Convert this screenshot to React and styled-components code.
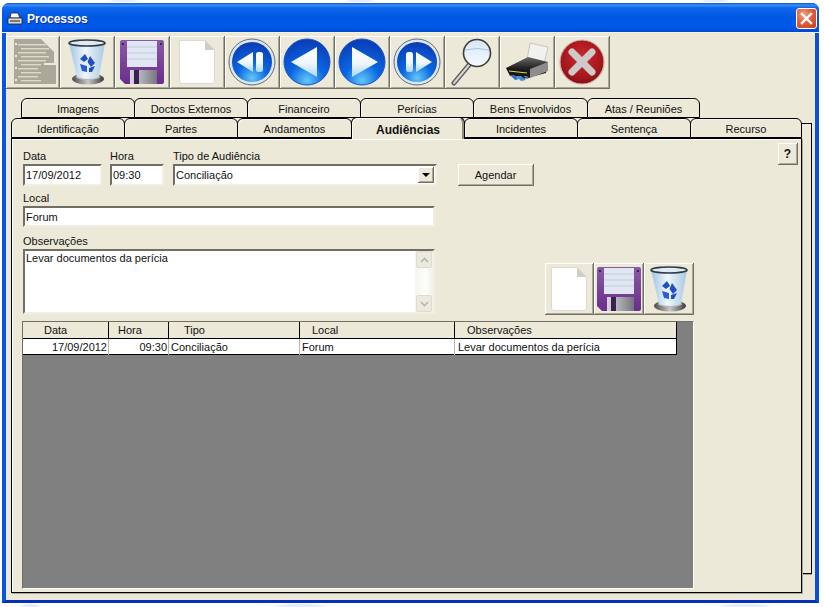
import React from 'react';
import styled, { createGlobalStyle } from 'styled-components';

const GlobalStyle = createGlobalStyle`
  html, body {
    margin: 0;
    padding: 0;
    height: 607px;
    overflow: hidden;
    background: #fff;
    font-family: "Liberation Sans", Arial, sans-serif;
    font-size: 11px;
    color: #111;
  }
`;

const raised = `
  box-sizing: border-box;
  box-shadow: inset 1px 1px 0 #fff, inset -1px -1px 0 #aca899;
  border-right: 1px solid #716f64;
  border-bottom: 1px solid #716f64;
`;

const sunken = `
  border-top: 2px solid #716f64;
  border-left: 2px solid #716f64;
  border-right: 2px solid #f1efe2;
  border-bottom: 2px solid #f1efe2;
`;

const Desktop = styled.div`
  padding: 3px 0 0 2px;
  height: 607px;
  box-sizing: border-box;
  background:
    radial-gradient(ellipse 16px 3px at 124px 0, #e6ecf8 60%, transparent 100%),
    radial-gradient(ellipse 16px 3px at 360px 0, #e6ecf8 60%, transparent 100%),
    radial-gradient(ellipse 16px 3px at 715px 0, #e6ecf8 60%, transparent 100%),
    radial-gradient(ellipse 12px 4px at 30px 607px, #e6ecf8 60%, transparent 100%),
    radial-gradient(ellipse 30px 4px at 300px 607px, #e6ecf8 60%, transparent 100%),
    radial-gradient(ellipse 30px 4px at 745px 607px, #e6ecf8 60%, transparent 100%),
    #fff;
`;

const Window = styled.div`
  width: 817px;
  height: 600px;
  box-sizing: border-box;
  background: #ece9d8;
  border-left: 4px solid #0a55e0;
  border-right: 4px solid #0a50d8;
  border-bottom: 3px solid #0431b8;
  border-radius: 7px 7px 0 0;
`;

const TitleBar = styled.div`
  height: 30px;
  box-sizing: border-box;
  margin: 0 -4px;
  padding: 3px 2px 0 5px;
  display: flex;
  align-items: center;
  gap: 4px;
  border-radius: 7px 7px 0 0;
  background: linear-gradient(180deg, #0a5bdd 0, #3d8df2 8%, #0f68ec 16%, #0057e4 50%, #0059ea 82%, #0049cf 100%);
  border-bottom: 1px solid #f4f2e6;
`;

const TitleText = styled.span`
  flex: 1;
  color: #fff;
  font-weight: bold;
  font-size: 12px;
  text-shadow: 1px 1px 0 #0a2f9c;
`;

const CloseButton = styled.div`
  width: 19px;
  height: 19px;
  margin-top: -1px;
  display: flex;
  align-items: center;
  justify-content: center;
  border: 1px solid #fff;
  border-radius: 3px;
  background: radial-gradient(circle at 35% 30%, #f0a080 0, #e0603a 45%, #c73d1c 100%);
`;

const Toolbar = styled.div`
  display: flex;
  padding: 3px 0 0 0;
`;

const ToolButton = styled.div`
  width: ${(p) => p.$w || 55}px;
  height: ${(p) => p.$h || 53}px;
  flex-shrink: 0;
  display: flex;
  align-items: center;
  justify-content: center;
  ${raised}
`;

const TabArea = styled.div`
  position: relative;
  width: 791px;
  margin: 9px 0 0 5px;
`;

const BackPage = styled.div`
  position: absolute;
  left: 770px;
  top: 25px;
  width: 30px;
  height: 449px;
  border: 1px solid #000;
  border-left: 0;
  background: #ece9d8;
  box-shadow: 0 1px 0 #aca899;
`;

const TabRow = styled.div`
  position: relative;
  display: flex;
  height: 20px;
  padding-left: ${(p) => p.$indent || 0}px;
`;

const Tab = styled.div`
  position: relative;
  width: ${(p) => p.$w}px;
  height: ${(p) => (p.$active ? 22 : 20)}px;
  margin-top: ${(p) => (p.$active ? -1 : 0)}px;
  margin-right: -1px;
  box-sizing: border-box;
  z-index: ${(p) => (p.$active ? 2 : 1)};
  display: flex;
  align-items: center;
  justify-content: center;
  padding-top: ${(p) => (p.$active ? 3 : 2)}px;
  background: #ece9d8;
  border: 1px solid #000;
  border-bottom: ${(p) => (p.$active ? '0' : '1px solid #000')};
  border-radius: 6px 6px 0 0;
  font-size: ${(p) => (p.$active ? 12 : 11)}px;
  font-weight: ${(p) => (p.$active ? 'bold' : 'normal')};
  box-shadow: ${(p) => (p.$active ? 'inset 1px 1px 0 #fff, inset -2px 0 0 #8f8c7e' : 'inset 1px 1px 0 #f7f5ea')};
`;

const Panel = styled.div`
  position: relative;
  width: 791px;
  height: 455px;
  box-sizing: border-box;
  background: #ece9d8;
  border: 1px solid #000;
  box-shadow: inset 1px 1px 0 #fff, 1px 1px 0 #aca899;
  padding: 4px 0 0 11px;
`;

const TopRow = styled.div`
  display: flex;
  align-items: flex-start;
`;

const Field = styled.div`
  width: ${(p) => p.$w}px;
  margin-right: ${(p) => p.$gap || 0}px;
  margin-top: ${(p) => p.$top || 0}px;
`;

const Label = styled.div`
  height: 14px;
  line-height: 13px;
`;

const TextBox = styled.input`
  display: block;
  width: 100%;
  height: ${(p) => p.$h || 22}px;
  box-sizing: border-box;
  ${sunken}
  padding: 0 1px;
  margin: 0;
  outline: 0;
  background: #fff;
  color: #111;
  font: 11px "Liberation Sans", Arial, sans-serif;
`;

const SelectBox = styled.div`
  height: 22px;
  box-sizing: border-box;
  ${sunken}
  background: #fff;
  display: flex;
  align-items: center;
  padding-left: 1px;
`;

const SelectValue = styled.span`
  flex: 1;
`;

const SelectArrow = styled.div`
  width: 16px;
  height: 16px;
  margin-right: 1px;
  display: flex;
  align-items: center;
  justify-content: center;
  background: #ece9d8;
  ${raised}
  &::after {
    content: "";
    border-left: 4px solid transparent;
    border-right: 4px solid transparent;
    border-top: 4px solid #000;
  }
`;

const PushButton = styled.div`
  width: 76px;
  height: 22px;
  margin: 21px 0 0 21px;
  display: flex;
  align-items: center;
  justify-content: center;
  background: #ece9d8;
  ${raised}
`;

const HelpButton = styled.div`
  width: 20px;
  height: 22px;
  margin: 0 3px 0 auto;
  display: flex;
  align-items: center;
  justify-content: center;
  font-size: 12px;
  font-weight: bold;
  ${raised}
`;

const ObsRow = styled.div`
  display: flex;
  align-items: flex-end;
  margin-top: 8px;
`;

const ObsBox = styled.div`
  display: flex;
  height: 65px;
  box-sizing: border-box;
  ${sunken}
  background: #fff;
`;

const ObsText = styled.div`
  flex: 1;
  padding: 1px;
`;

const ScrollBar = styled.div`
  width: 18px;
  display: flex;
  flex-direction: column;
  justify-content: space-between;
  background: linear-gradient(90deg, #f5f4ee, #fdfdfb 60%, #f0efe6);
`;

const ScrollArrow = styled.div`
  height: 17px;
  margin: 0 1px;
  display: flex;
  align-items: center;
  justify-content: center;
  background: #ece9df;
  border: 1px solid #dedccf;
  border-radius: 2px;
  box-sizing: border-box;
`;

const RecordButtons = styled.div`
  display: flex;
  margin: 0 0 -1px 110px;
`;

const HiddenSvg = styled.svg`
  position: absolute;
`;

const Grid = styled.div`
  width: 672px;
  height: 268px;
  margin: 7px 0 0 -1px;
  box-sizing: border-box;
  background: #808080;
  border-top: 1px solid #716f64;
  border-left: 1px solid #716f64;
  border-right: 1px solid #fff;
  border-bottom: 1px solid #fff;
`;

const GridRow = styled.div`
  display: grid;
  grid-template-columns: 86px 60px 131px 155px 222px;
  width: 654px;
  height: ${(p) => p.$h}px;
  box-sizing: border-box;
  background: ${(p) => (p.$head ? '#ece9d8' : '#fff')};
  border-bottom: 1px solid #000;
  border-right: 1px solid #000;
`;

const HeadCell = styled.div`
  box-sizing: border-box;
  padding-left: ${(p) => p.$pad}px;
  line-height: 17px;
  border-right: 1px solid #000;
  &:last-child { border-right: 0; }
`;

const Cell = styled.div`
  box-sizing: border-box;
  padding: 0 1px 0 2px;
  line-height: 16px;
  text-align: ${(p) => (p.$right ? 'right' : 'left')};
  border-right: 1px solid #b9b7aa;
  white-space: nowrap;
  &:last-child { border-right: 0; padding-left: 3px; }
`;

const Defs = () => (
  <HiddenSvg width="0" height="0">
    <defs>
      <radialGradient id="blueBall" cx="50%" cy="90%" r="85%">
        <stop offset="0" stopColor="#62c8fa" />
        <stop offset="0.45" stopColor="#0a66e0" />
        <stop offset="1" stopColor="#0a3fb8" />
      </radialGradient>
      <linearGradient id="glyph" x1="0" y1="0" x2="0" y2="1">
        <stop offset="0" stopColor="#ffffff" />
        <stop offset="0.55" stopColor="#eef6fd" />
        <stop offset="1" stopColor="#a9d6f6" />
      </linearGradient>
      <radialGradient id="redBall" cx="50%" cy="40%" r="65%">
        <stop offset="0" stopColor="#c92a2e" />
        <stop offset="0.7" stopColor="#a5161c" />
        <stop offset="1" stopColor="#7c0d12" />
      </radialGradient>
      <linearGradient id="binGlass" x1="0" y1="0" x2="1" y2="0">
        <stop offset="0" stopColor="#9ec3e2" />
        <stop offset="0.45" stopColor="#eef6fc" />
        <stop offset="1" stopColor="#a9c8e2" />
      </linearGradient>
      <linearGradient id="binBase" x1="0" y1="0" x2="1" y2="0">
        <stop offset="0" stopColor="#4c4c4c" />
        <stop offset="0.5" stopColor="#c8c8c8" />
        <stop offset="1" stopColor="#3c3c3c" />
      </linearGradient>
      <linearGradient id="floppyBody" x1="0" y1="0" x2="0" y2="1">
        <stop offset="0" stopColor="#8a5aa5" />
        <stop offset="1" stopColor="#6a2d8c" />
      </linearGradient>
      <linearGradient id="shutter" x1="0" y1="0" x2="1" y2="0">
        <stop offset="0" stopColor="#d8d6de" />
        <stop offset="1" stopColor="#77757f" />
      </linearGradient>
      <linearGradient id="printerBody" x1="0" y1="0" x2="0" y2="1">
        <stop offset="0" stopColor="#6a6a6a" />
        <stop offset="0.5" stopColor="#222" />
        <stop offset="1" stopColor="#0c0c0c" />
      </linearGradient>
      <linearGradient id="lensFill" x1="0" y1="0" x2="0" y2="1">
        <stop offset="0" stopColor="#d6e6f6" />
        <stop offset="1" stopColor="#f6fafe" />
      </linearGradient>
    </defs>
  </HiddenSvg>
);

const DisabledDocIcon = () => (
  <svg width="48" height="48" viewBox="0 0 48 48">
    <path d="M5 1H32L45 14V25H35V46H5Z" fill="#aaa898" />
    <rect x="33" y="27" width="14" height="19" fill="#aaa898" />
    {[6, 10, 14, 18, 22, 26, 30, 34, 38, 42].map((y) => (
      <rect key={y} x={y % 8 === 6 ? 9 : 12} y={y} width={y > 22 ? 20 : 28} height="1.4" fill="#dedbca" />
    ))}
    <rect x="6" y="5" width="2" height="2" fill="#ece9d8" />
    <rect x="6" y="17" width="2" height="2" fill="#ece9d8" />
    <rect x="6" y="29" width="2" height="2" fill="#ece9d8" />
    <rect x="6" y="41" width="2" height="2" fill="#ece9d8" />
  </svg>
);

const TrashIcon = () => (
  <svg width="46" height="48" viewBox="0 0 46 48">
    <ellipse cx="24" cy="41" rx="16" ry="5.5" fill="url(#binBase)" />
    <ellipse cx="24" cy="39" rx="12" ry="3" fill="#b9b9b9" />
    <path d="M5 5L13 39Q24 43 35 39L41 5Z" fill="url(#binGlass)" />
    <ellipse cx="23" cy="5" rx="18" ry="3" fill="#dfeaf3" stroke="#2d3a44" strokeWidth="1.6" />
    <path d="M16 21L21 16L24 21L20 24Z" fill="#1f4fc0" />
    <path d="M26 18L31 25L27 29L23.5 24Z" fill="#1f4fc0" />
    <path d="M16 26L23 28V34L18 33Z" fill="#2a5dcf" />
    <path d="M25 30L31 28L28 34L25 34Z" fill="#1f4fc0" />
  </svg>
);

const FloppyIcon = () => (
  <svg width="46" height="46" viewBox="0 0 46 46">
    <path d="M1 3Q1 1 3 1H43Q45 1 45 3V43Q45 45 43 45H6L1 40Z" fill="url(#floppyBody)" />
    <rect x="8" y="2" width="30" height="26" fill="#e0e6f2" />
    <path d="M8 8H38M8 14H38M8 20H38" stroke="#c2cbdf" strokeWidth="1" />
    <rect x="11" y="31" width="27" height="14" fill="url(#shutter)" />
    <rect x="15" y="31" width="5" height="14" fill="#3c2150" />
    <rect x="3" y="4" width="2" height="2" fill="#3f2058" />
    <rect x="41" y="4" width="2" height="2" fill="#3f2058" />
  </svg>
);

const PageIcon = () => (
  <svg width="38" height="46" viewBox="0 0 38 46">
    <path d="M1.5 1.5H27L36.5 11V42Q36.5 44.5 34 44.5H4Q1.5 44.5 1.5 42Z" fill="#fff" stroke="#dcdad0" strokeWidth="1" />
    <path d="M27 1.5V11H36.5Z" fill="#cfcdc4" />
  </svg>
);

const BlueButtonIcon = ({ kind }) => {
  const ring = kind === 'first' || kind === 'last';
  return (
    <svg width="48" height="48" viewBox="0 0 48 48">
      {ring && <circle cx="24" cy="24" r="23" fill="#dfe6ee" stroke="#5b6b80" strokeWidth="1" />}
      <circle cx="24" cy="24" r={ring ? 20 : 23} fill="url(#blueBall)" stroke={ring ? 'none' : '#1a50c8'} />
      {kind === 'first' && (
        <>
          <path d="M9 24L25 14V34Z" fill="url(#glyph)" />
          <rect x="28" y="14" width="7" height="20" rx="2.5" fill="url(#glyph)" />
        </>
      )}
      {kind === 'prev' && <path d="M8 24L34 9V39Z" fill="url(#glyph)" />}
      {kind === 'next' && <path d="M40 24L14 9V39Z" fill="url(#glyph)" />}
      {kind === 'last' && (
        <>
          <rect x="13" y="14" width="7" height="20" rx="2.5" fill="url(#glyph)" />
          <path d="M39 24L23 14V34Z" fill="url(#glyph)" />
        </>
      )}
    </svg>
  );
};

const SearchIcon = () => (
  <svg width="44" height="48" viewBox="0 0 44 48">
    <path d="M4 45L19 27" stroke="#5d5d5d" strokeWidth="5" strokeLinecap="round" />
    <path d="M4 45L19 27" stroke="#d4d4d4" strokeWidth="2" strokeLinecap="round" />
    <circle cx="27" cy="15" r="13.5" fill="url(#lensFill)" stroke="#3c3c3c" strokeWidth="1.6" />
    <path d="M15 12Q27 9 39 12" stroke="#a8c4de" strokeWidth="1" fill="none" />
  </svg>
);

const PrinterIcon = () => (
  <svg width="46" height="44" viewBox="0 0 46 44">
    <path d="M26 3L44 7L40 24L23 20Z" fill="#f1f1ef" stroke="#b5b5b5" strokeWidth="0.7" />
    <path d="M2 28L24 17L44 22L42 33L19 39Z" fill="url(#printerBody)" />
    <path d="M44 22V31L26 38L26 29Z" fill="#8d8d8d" />
    <path d="M2 28L24 30L26 38L6 36Z" fill="#171717" />
    <path d="M5 31L23 33" stroke="#e6d84a" strokeWidth="1" />
    <path d="M6 35L11 40L15 39L10 35Z" fill="#2f6fd0" />
    <path d="M12 36L17 41L22 40L17 36Z" fill="#3f8fd8" />
    <path d="M19 36L23 39L25 38L23 36Z" fill="#5d6f8a" />
  </svg>
);

const StopIcon = () => (
  <svg width="46" height="46" viewBox="0 0 46 46">
    <circle cx="23" cy="23" r="22" fill="url(#redBall)" stroke="#c9b0a8" strokeWidth="1.2" />
    <path d="M13 13L33 33M33 13L13 33" stroke="#cfcaca" strokeWidth="7" strokeLinecap="round" />
  </svg>
);

const WindowIcon = () => (
  <svg width="16" height="14" viewBox="0 0 16 14">
    <path d="M4 1H11L13 6H3Z" fill="#fff" stroke="#222" strokeWidth="0.8" />
    <path d="M1 6H15V12H1Z" fill="#d8d8d8" stroke="#222" strokeWidth="0.8" />
    <path d="M3 9H13" stroke="#222" strokeWidth="1" />
  </svg>
);

const CloseIcon = () => (
  <svg width="13" height="13" viewBox="0 0 13 13">
    <path d="M2 2L11 11M11 2L2 11" stroke="#fff" strokeWidth="2.4" strokeLinecap="square" />
  </svg>
);

const ScrollGlyph = ({ up }) => (
  <svg width="9" height="6" viewBox="0 0 9 6">
    <path d={up ? 'M1 5L4.5 1.5L8 5' : 'M1 1L4.5 4.5L8 1'} stroke="#b8b6a8" strokeWidth="1.6" fill="none" />
  </svg>
);

const backTabs = [
  ['Imagens', 114],
  ['Doctos Externos', 114],
  ['Financeiro', 114],
  ['Perícias', 114],
  ['Bens Envolvidos', 115],
  ['Atas / Reuniões', 113],
];

const frontTabs = [
  ['Identificação', 114],
  ['Partes', 114],
  ['Andamentos', 115],
  ['Audiências', 114],
  ['Incidentes', 114],
  ['Sentença', 114],
  ['Recurso', 112],
];

const columns = [
  ['Data', 21],
  ['Hora', 9],
  ['Tipo', 15],
  ['Local', 12],
  ['Observações', 12],
];

export default function App() {
  return (
    <Desktop>
      <GlobalStyle />
      <Defs />
      <Window>
        <TitleBar>
          <WindowIcon />
          <TitleText>Processos</TitleText>
          <CloseButton><CloseIcon /></CloseButton>
        </TitleBar>
        <Toolbar>
          <ToolButton $w={54}><DisabledDocIcon /></ToolButton>
          <ToolButton><TrashIcon /></ToolButton>
          <ToolButton><FloppyIcon /></ToolButton>
          <ToolButton><PageIcon /></ToolButton>
          <ToolButton><BlueButtonIcon kind="first" /></ToolButton>
          <ToolButton><BlueButtonIcon kind="prev" /></ToolButton>
          <ToolButton><BlueButtonIcon kind="next" /></ToolButton>
          <ToolButton><BlueButtonIcon kind="last" /></ToolButton>
          <ToolButton><SearchIcon /></ToolButton>
          <ToolButton><PrinterIcon /></ToolButton>
          <ToolButton><StopIcon /></ToolButton>
        </Toolbar>
        <TabArea>
          <BackPage />
          <TabRow $indent={10}>
            {backTabs.map(([name, w]) => <Tab key={name} $w={w}>{name}</Tab>)}
          </TabRow>
          <TabRow>
            {frontTabs.map(([name, w]) => (
              <Tab key={name} $w={w} $active={name === 'Audiências'}>{name}</Tab>
            ))}
          </TabRow>
          <Panel>
            <TopRow>
              <Field $w={79} $gap={8} $top={7}>
                <Label>Data</Label>
                <TextBox readOnly value="17/09/2012" />
              </Field>
              <Field $w={54} $gap={9} $top={7}>
                <Label>Hora</Label>
                <TextBox readOnly value="09:30" />
              </Field>
              <Field $w={264} $top={7}>
                <Label>Tipo de Audiência</Label>
                <SelectBox>
                  <SelectValue>Conciliação</SelectValue>
                  <SelectArrow />
                </SelectBox>
              </Field>
              <PushButton>Agendar</PushButton>
              <HelpButton>?</HelpButton>
            </TopRow>
            <Field $w={412} $top={6}>
              <Label>Local</Label>
              <TextBox $h={21} readOnly value="Forum" />
            </Field>
            <ObsRow>
              <Field $w={412}>
                <Label>Observações</Label>
                <ObsBox>
                  <ObsText>Levar documentos da perícia</ObsText>
                  <ScrollBar>
                    <ScrollArrow><ScrollGlyph up /></ScrollArrow>
                    <ScrollArrow><ScrollGlyph /></ScrollArrow>
                  </ScrollBar>
                </ObsBox>
              </Field>
              <RecordButtons>
                <ToolButton $w={49} $h={52}><PageIcon /></ToolButton>
                <ToolButton $w={50} $h={52}><FloppyIcon /></ToolButton>
                <ToolButton $w={50} $h={52}><TrashIcon /></ToolButton>
              </RecordButtons>
            </ObsRow>
            <Grid>
              <GridRow $head $h={17}>
                {columns.map(([name, pad]) => <HeadCell key={name} $pad={pad}>{name}</HeadCell>)}
              </GridRow>
              <GridRow $h={16}>
                <Cell $right>17/09/2012</Cell>
                <Cell $right>09:30</Cell>
                <Cell>Conciliação</Cell>
                <Cell>Forum</Cell>
                <Cell>Levar documentos da perícia</Cell>
              </GridRow>
            </Grid>
          </Panel>
        </TabArea>
      </Window>
    </Desktop>
  );
}
